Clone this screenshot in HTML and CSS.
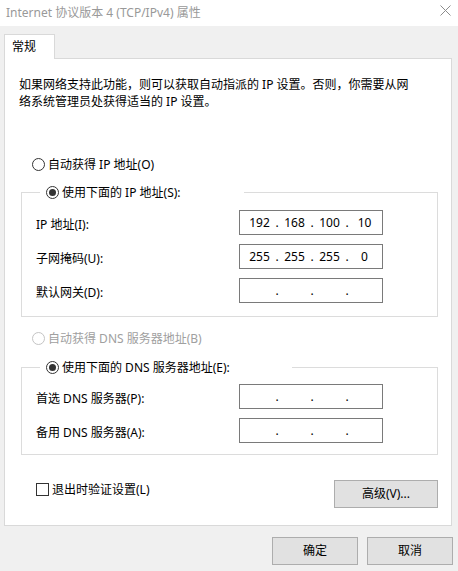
FILE: index.html
```html
<!DOCTYPE html>
<html lang="zh-CN">
<head>
<meta charset="utf-8">
<title>Internet 协议版本 4 (TCP/IPv4) 属性</title>
<link rel="stylesheet" href="styles.css">
</head>
<body>
<div class="window">
  <div class="titlebar">
    <span class="title">Internet 协议版本 4 (TCP/IPv4) 属性</span>
    <svg class="close" width="11" height="11" viewBox="0 0 11 11"><path d="M0.5 0.5 L10.5 10.5 M10.5 0.5 L0.5 10.5" stroke="#8c8c8c" stroke-width="1" fill="none"/></svg>
  </div>
  <div class="tabs"><div class="tab">常规</div></div>
  <div class="panel">
    <p class="desc">如果网络支持此功能，则可以获取自动指派的 IP 设置。否则，你需要从网<br>络系统管理员处获得适当的 IP 设置。</p>

    <div class="radio-row first"><span class="radio"></span><span>自动获得 IP 地址(O)</span></div>

    <fieldset class="group group-ip">
      <legend class="legend legend-ip"><span class="radio checked"></span><span>使用下面的 IP 地址(S):</span></legend>
      <div class="fields">
        <span class="flabel">IP 地址(I):</span>
        <div class="ipbox"><span class="seg">192</span><span class="dot">.</span><span class="seg">168</span><span class="dot">.</span><span class="seg">100</span><span class="dot">.</span><span class="seg">10</span></div>
        <span class="flabel">子网掩码(U):</span>
        <div class="ipbox"><span class="seg">255</span><span class="dot">.</span><span class="seg">255</span><span class="dot">.</span><span class="seg">255</span><span class="dot">.</span><span class="seg">0</span></div>
        <span class="flabel">默认网关(D):</span>
        <div class="ipbox"><span class="seg"></span><span class="dot">.</span><span class="seg"></span><span class="dot">.</span><span class="seg"></span><span class="dot">.</span><span class="seg"></span></div>
      </div>
    </fieldset>

    <div class="radio-row disabled"><span class="radio"></span><span>自动获得 DNS 服务器地址(B)</span></div>

    <fieldset class="group group-dns">
      <legend class="legend legend-dns"><span class="radio checked"></span><span>使用下面的 DNS 服务器地址(E):</span></legend>
      <div class="fields">
        <span class="flabel">首选 DNS 服务器(P):</span>
        <div class="ipbox"><span class="seg"></span><span class="dot">.</span><span class="seg"></span><span class="dot">.</span><span class="seg"></span><span class="dot">.</span><span class="seg"></span></div>
        <span class="flabel">备用 DNS 服务器(A):</span>
        <div class="ipbox"><span class="seg"></span><span class="dot">.</span><span class="seg"></span><span class="dot">.</span><span class="seg"></span><span class="dot">.</span><span class="seg"></span></div>
      </div>
    </fieldset>

    <div class="bottom-row">
      <div class="check-row"><span class="checkbox"></span><span>退出时验证设置(L)</span></div>
      <button class="btn adv">高级(V)...</button>
    </div>
  </div>
  <div class="footer">
    <button class="btn action">确定</button>
    <button class="btn action">取消</button>
  </div>
</div>
</body>
</html>
```

FILE: styles.css
```css
* { box-sizing: border-box; }

html, body {
  margin: 0;
  padding: 0;
}

body {
  background: #f0f0f0;
  font-family: "Noto Sans", "Noto Sans CJK SC", sans-serif;
  font-size: 12px;
  line-height: 17px;
  color: #000;
}

.window {
  width: 458px;
  height: 571px;
  overflow: hidden;
}

.titlebar {
  height: 26px;
  background: #fff;
  display: flex;
  align-items: center;
  padding: 0 7px 2px 6px;
}

.title {
  color: #999;
  flex: 1;
}

.close {
  display: block;
  margin-bottom: 3px;
}

.tabs {
  padding: 8px 0 0 4px;
  display: flex;
}

.tab {
  position: relative;
  z-index: 1;
  width: 51px;
  height: 25px;
  margin-bottom: -1px;
  background: #fff;
  border: 1px solid #d9d9d9;
  border-bottom: none;
  padding-left: 7px;
  line-height: 24px;
}

.panel {
  margin-left: 4px;
  width: 448px;
  height: 468px;
  background: #fff;
  border: 1px solid #d9d9d9;
  padding: 17px 0 0 14px;
}

.desc {
  margin: 0;
  line-height: 17px;
  white-space: nowrap;
}

.radio-row {
  display: flex;
  align-items: center;
  gap: 3px;
  height: 17px;
  margin-left: 13px;
}

.radio-row.first {
  margin-top: 46px;
}

.radio {
  width: 13px;
  height: 13px;
  border: 1px solid #333;
  border-radius: 50%;
  background: #fff;
  display: flex;
  align-items: center;
  justify-content: center;
  flex: none;
}

.radio.checked::after {
  content: "";
  width: 7px;
  height: 7px;
  border-radius: 50%;
  background: #333;
}

.radio-row.disabled {
  color: #a0a0a0;
  margin-top: 13px;
}

.radio-row.disabled .radio {
  border-color: #c4c4c4;
}

.group {
  margin: 11px 0 0 2px;
  width: 417px;
  border: 1px solid #dcdcdc;
  padding: 9px 0 13px 14px;
  min-inline-size: 0;
}

.group-dns {
  margin-top: 12px;
  padding: 8px 0 11px 14px;
}

.legend {
  margin-left: 4px;
  padding: 0 0 0 6px;
  display: flex;
  align-items: center;
  gap: 3px;
  height: 17px;
}

.legend-ip { width: 204px; }
.legend-dns { width: 252px; }

.fields {
  display: grid;
  grid-template-columns: 203px 144px;
  grid-auto-rows: 25px;
  row-gap: 9px;
  align-items: center;
}

.flabel {
  line-height: 17px;
  padding-top: 3px;
}

.ipbox {
  height: 25px;
  border: 1px solid #7a7a7a;
  background: #fff;
  display: flex;
  align-items: center;
  padding-left: 6px;
}

.seg {
  width: 27px;
  text-align: center;
}

.dot {
  width: 8px;
  text-align: center;
}

.bottom-row {
  display: flex;
  align-items: flex-start;
  margin-top: 25px;
  padding-right: 13px;
}

.check-row {
  display: flex;
  align-items: center;
  gap: 3px;
  height: 17px;
  margin: 1px 0 0 17px;
}

.checkbox {
  width: 13px;
  height: 13px;
  border: 1px solid #333;
  background: #fff;
  flex: none;
}

.btn {
  font: inherit;
  color: #000;
  background: #e1e1e1;
  border: 1px solid #adadad;
  height: 28px;
  padding: 0;
  margin: 0;
  line-height: 26px;
}

.adv {
  margin-left: auto;
  width: 104px;
}

.footer {
  display: flex;
  justify-content: flex-end;
  gap: 9px;
  margin-top: 11px;
  padding-right: 5px;
}

.action {
  width: 86px;
}
```
